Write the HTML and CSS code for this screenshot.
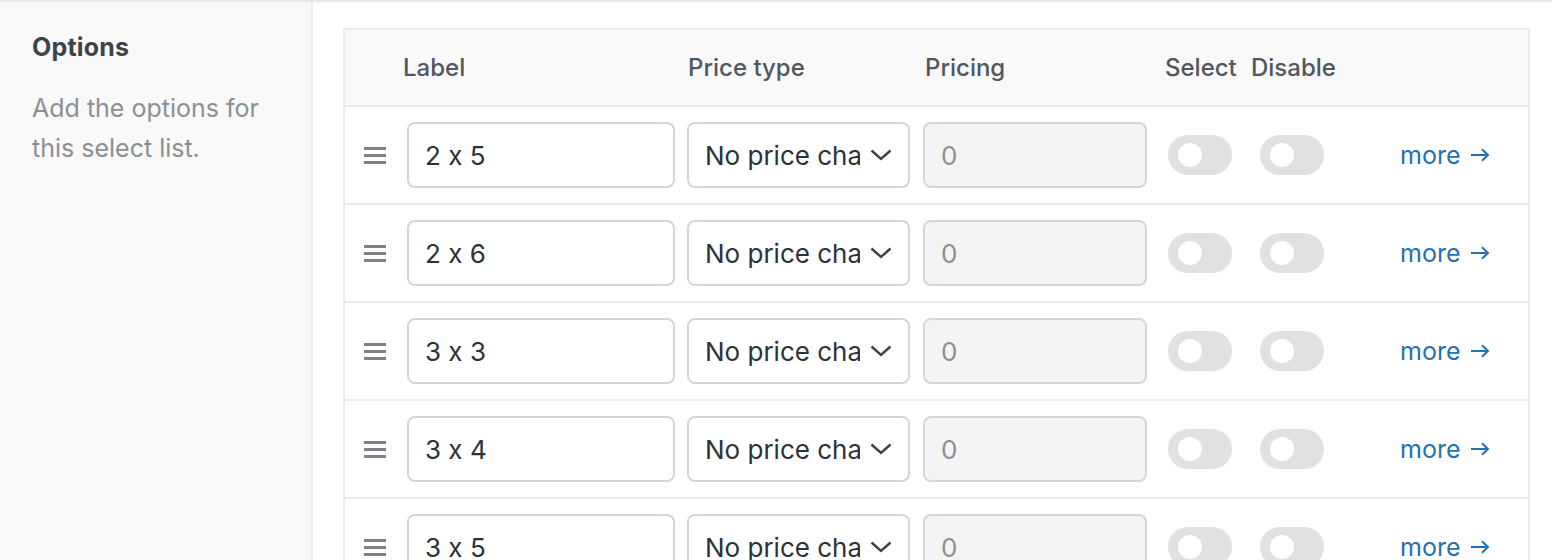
FILE: index.html
```html
<!DOCTYPE html>
<html lang="en">
<head>
<meta charset="utf-8">
<title>Options</title>
<link rel="stylesheet" href="styles.css">
</head>
<body>
<div class="page">
  <aside class="sidebar">
    <h2 class="side-title">Options</h2>
    <p class="side-desc">Add the options for this select list.</p>
  </aside>
  <main class="main">
    <div class="table">
      <div class="head">
        <div class="h h-label">Label</div>
        <div class="h h-type">Price type</div>
        <div class="h h-pricing">Pricing</div>
        <div class="h h-select">Select</div>
        <div class="h h-disable">Disable</div>
      </div>

      <div class="row">
        <div class="handle"><span></span><span></span><span></span></div>
        <div class="field label-field">2 x 5</div>
        <div class="field select-field"><span class="sel-text">No price change</span><svg class="chev" viewBox="0 0 22 12" width="22" height="12"><path d="M1.5 1.5 L11 10 L20.5 1.5" fill="none" stroke="#3c434a" stroke-width="2.4"/></svg></div>
        <div class="field price-field">0</div>
        <div class="toggle"><span class="knob"></span></div>
        <div class="toggle"><span class="knob"></span></div>
        <a class="more" href="#">more <svg viewBox="0 0 20 14" width="20" height="14"><path d="M1 7 H18 M12 1.2 L18 7 L12 12.8" fill="none" stroke="#2271b1" stroke-width="2"/></svg></a>
      </div>

      <div class="row">
        <div class="handle"><span></span><span></span><span></span></div>
        <div class="field label-field">2 x 6</div>
        <div class="field select-field"><span class="sel-text">No price change</span><svg class="chev" viewBox="0 0 22 12" width="22" height="12"><path d="M1.5 1.5 L11 10 L20.5 1.5" fill="none" stroke="#3c434a" stroke-width="2.4"/></svg></div>
        <div class="field price-field">0</div>
        <div class="toggle"><span class="knob"></span></div>
        <div class="toggle"><span class="knob"></span></div>
        <a class="more" href="#">more <svg viewBox="0 0 20 14" width="20" height="14"><path d="M1 7 H18 M12 1.2 L18 7 L12 12.8" fill="none" stroke="#2271b1" stroke-width="2"/></svg></a>
      </div>

      <div class="row">
        <div class="handle"><span></span><span></span><span></span></div>
        <div class="field label-field">3 x 3</div>
        <div class="field select-field"><span class="sel-text">No price change</span><svg class="chev" viewBox="0 0 22 12" width="22" height="12"><path d="M1.5 1.5 L11 10 L20.5 1.5" fill="none" stroke="#3c434a" stroke-width="2.4"/></svg></div>
        <div class="field price-field">0</div>
        <div class="toggle"><span class="knob"></span></div>
        <div class="toggle"><span class="knob"></span></div>
        <a class="more" href="#">more <svg viewBox="0 0 20 14" width="20" height="14"><path d="M1 7 H18 M12 1.2 L18 7 L12 12.8" fill="none" stroke="#2271b1" stroke-width="2"/></svg></a>
      </div>

      <div class="row">
        <div class="handle"><span></span><span></span><span></span></div>
        <div class="field label-field">3 x 4</div>
        <div class="field select-field"><span class="sel-text">No price change</span><svg class="chev" viewBox="0 0 22 12" width="22" height="12"><path d="M1.5 1.5 L11 10 L20.5 1.5" fill="none" stroke="#3c434a" stroke-width="2.4"/></svg></div>
        <div class="field price-field">0</div>
        <div class="toggle"><span class="knob"></span></div>
        <div class="toggle"><span class="knob"></span></div>
        <a class="more" href="#">more <svg viewBox="0 0 20 14" width="20" height="14"><path d="M1 7 H18 M12 1.2 L18 7 L12 12.8" fill="none" stroke="#2271b1" stroke-width="2"/></svg></a>
      </div>

      <div class="row">
        <div class="handle"><span></span><span></span><span></span></div>
        <div class="field label-field">3 x 5</div>
        <div class="field select-field"><span class="sel-text">No price change</span><svg class="chev" viewBox="0 0 22 12" width="22" height="12"><path d="M1.5 1.5 L11 10 L20.5 1.5" fill="none" stroke="#3c434a" stroke-width="2.4"/></svg></div>
        <div class="field price-field">0</div>
        <div class="toggle"><span class="knob"></span></div>
        <div class="toggle"><span class="knob"></span></div>
        <a class="more" href="#">more <svg viewBox="0 0 20 14" width="20" height="14"><path d="M1 7 H18 M12 1.2 L18 7 L12 12.8" fill="none" stroke="#2271b1" stroke-width="2"/></svg></a>
      </div>
    </div>
  </main>
</div>
</body>
</html>
```

FILE: styles.css
```css
html, body {
  margin: 0;
  padding: 0;
  background: #ffffff;
  height: 100%;
  overflow: hidden;
}

body {
  font-family: Inter, "Noto Sans", "Liberation Sans", sans-serif;
  font-feature-settings: "calt" 0;
  color: #2c3338;
}

.page {
  display: flex;
  border-top: 2px solid #e8e8e8;
  min-height: 100%;
  box-sizing: border-box;
}

.sidebar {
  width: 313px;
  flex: none;
  box-sizing: border-box;
  background: #f9f9f9;
  border-right: 2px solid #ececec;
  padding: 28px 32px;
}

.side-title {
  margin: 0;
  font-size: 25px;
  line-height: 34px;
  font-weight: 700;
  color: #3c434a;
  letter-spacing: 0.2px;
}

.side-desc {
  margin: 24px 0 0;
  font-size: 25px;
  line-height: 40px;
  color: #8c8f94;
}

.main {
  flex: 1;
  padding: 26px 22px 0 30px;
}

.table {
  border: 2px solid #ebebeb;
}

.head {
  display: flex;
  align-items: center;
  height: 75px;
  background: #f9f9f9;
  border-bottom: 2px solid #ebebeb;
  font-size: 24px;
  font-weight: 500;
  color: #50575e;
}

.h { flex: none; }
.h-label { margin-left: 58px; width: 285px; }
.h-type { width: 237px; }
.h-pricing { width: 240px; }
.h-select { width: 86px; }
.h-disable { width: 100px; }

.row {
  display: flex;
  align-items: center;
  height: 96px;
  border-bottom: 2px solid #ebebeb;
  background: #fff;
}

.handle {
  width: 62px;
  flex: none;
  display: flex;
  flex-direction: column;
  align-items: center;
  gap: 4px;
  padding-right: 3px;
  box-sizing: border-box;
}

.handle span {
  display: block;
  width: 22px;
  height: 3px;
  background: #7e8287;
}

.field {
  flex: none;
  box-sizing: border-box;
  height: 66px;
  border: 2px solid #d3d6de;
  border-radius: 8px;
  display: flex;
  align-items: center;
  padding: 0 16px;
  font-size: 26px;
  color: #2c3338;
  background: #fff;
}

.label-field { width: 268px; }

.select-field {
  width: 223px;
  margin-left: 12px;
  padding-right: 16px;
  gap: 10px;
  overflow: hidden;
}

.sel-text {
  flex: 1;
  white-space: nowrap;
  overflow: hidden;
}

.chev { flex: none; }

.price-field {
  width: 224px;
  margin-left: 13px;
  background: #f4f4f4;
  color: #8c8f94;
  padding-left: 16px;
}

.toggle {
  flex: none;
  width: 64px;
  height: 40px;
  border-radius: 20px;
  background: #e1e1e1;
  margin-left: 21px;
  display: flex;
  align-items: center;
  padding-left: 10px;
  box-sizing: border-box;
}

.toggle + .toggle { margin-left: 28px; }

.knob {
  width: 24px;
  height: 24px;
  border-radius: 50%;
  background: #fff;
}

.more {
  margin-left: 76px;
  display: flex;
  align-items: center;
  gap: 10px;
  font-size: 25px;
  color: #2271b1;
  text-decoration: none;
}
```
